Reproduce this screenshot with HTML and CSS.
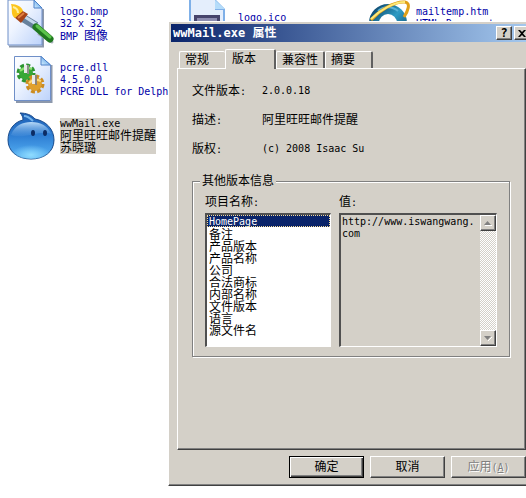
FILE: index.html
```html
<!DOCTYPE html>
<html lang="zh-CN">
  <head>
    <meta charset="UTF-8" />
    <meta name="viewport" content="width=device-width, initial-scale=1.0" />
    <title>wwMail.exe 属性</title>
    <link rel="stylesheet" href="styles.css">
  </head>
  <body>
    <!-- Shared gradients -->
    <svg class="defs" width="0" height="0" aria-hidden="true">
      <defs>
        <linearGradient id="paper" x1="0" y1="0" x2="1" y2="1">
          <stop offset="0" stop-color="#ffffff" />
          <stop offset="0.4" stop-color="#eef4ff" />
          <stop offset="1" stop-color="#bcd2fa" />
        </linearGradient>
        <linearGradient id="fold" x1="0" y1="1" x2="1" y2="0">
          <stop offset="0" stop-color="#d8f0ff" />
          <stop offset="1" stop-color="#3f8fe0" />
        </linearGradient>
        <linearGradient id="drop" x1="0" y1="0" x2="0" y2="1">
          <stop offset="0" stop-color="#1d5fb4" />
          <stop offset="0.5" stop-color="#2f7fd4" />
          <stop offset="1" stop-color="#58b4f6" />
        </linearGradient>
        <radialGradient id="glow" cx="0.5" cy="0.8" r="0.5">
          <stop offset="0" stop-color="#8fdcff" />
          <stop offset="1" stop-color="#8fdcff" stop-opacity="0" />
        </radialGradient>
        <linearGradient id="shine" x1="0" y1="0" x2="0" y2="1">
          <stop offset="0" stop-color="#b8daf8" />
          <stop offset="1" stop-color="#4d93dc" stop-opacity="0.3" />
        </linearGradient>
        <linearGradient id="globe" x1="0" y1="0" x2="1" y2="1">
          <stop offset="0" stop-color="#0f4c72" />
          <stop offset="0.5" stop-color="#2f9cc4" />
          <stop offset="1" stop-color="#0f4c72" />
        </linearGradient>
      </defs>
    </svg>

    <main class="desktop">
      <div class="file">
        <svg class="file-icon" viewBox="0 0 48 48">
          <path d="M2 46.500H36V9" fill="none" stroke="#8c98ac" stroke-width="2" />
          <path d="M1 0H27L35 8V45H1Z" fill="url(#paper)" stroke="#6f8fc8" />
          <path d="M27 0V8H35Z" fill="url(#fold)" stroke="#4c80c8" />
          <path d="M32 34L45 42" stroke="#a8b0bc" stroke-width="3" stroke-linecap="round" />
          <path d="M16 18L29 26" stroke="#66809c" stroke-width="8" />
          <path d="M18 17L29 24" stroke="#c4d8ec" stroke-width="3" />
          <path d="M29 27L43 39" stroke="#207820" stroke-width="7" stroke-linecap="round" />
          <path d="M30 26L43 37" stroke="#5cc44c" stroke-width="3" stroke-linecap="round" />
          <path d="M7 17L14 10L21 14L14 23Z" fill="#a84418" />
          <path d="M11 18L17 13" stroke="#e08040" stroke-width="2" />
          <path d="M4 4C10 4 15 7 16 11L8 18C3 15 6 9 4 4Z" fill="#fcc41c" />
          <path d="M6 7C10 8 11 10 11 13" fill="none" stroke="#fff09c" stroke-width="2" />
        </svg>
        <div class="file-text">
          <p class="latin">logo.bmp</p>
          <p class="latin">32 x 32</p>
          <p><span class="latin">BMP </span>图像</p>
        </div>
      </div>

      <div class="file">
        <svg class="file-icon" viewBox="0 0 48 48">
          <path d="M4 0H31L40 9V47H4Z" fill="#7fb0e8" />
          <path d="M6 0H30V10H38V47H6Z" fill="#e4eefc" />
          <path d="M30 0V9H40Z" fill="#b4dcfa" />
          <path d="M9 15H35V47H9Z" fill="#46446c" />
          <path d="M12 18H32V47H12Z" fill="#8c8cb0" />
        </svg>
        <div class="file-text">
          <p class="latin">logo.ico</p>
          <p>&nbsp;</p>
        </div>
      </div>

      <div class="file">
        <svg class="file-icon" viewBox="0 0 48 48">
          <circle cx="25" cy="23" r="14" fill="none" stroke="url(#globe)" stroke-width="10" />
          <path d="M15 11A15 15 0 0 1 35 11" fill="none" stroke="#5cb4d8" stroke-width="2" />
          <path d="M8 20C16 11 31 1 42 2C48 3 45 11 41 17" fill="none" stroke="#e0a018" stroke-width="3" />
          <path d="M8 19C17 10 31 2 42 2" fill="none" stroke="#fce878" stroke-width="2" />
        </svg>
        <div class="file-text">
          <p class="latin">mailtemp.htm</p>
          <p class="latin">HTML Document</p>
          <p>&nbsp;</p>
        </div>
      </div>

      <div class="file file-first">
        <svg class="file-icon" viewBox="0 0 48 48">
          <path d="M9 46H44.500V9" fill="none" stroke="#8c98ac" stroke-width="2" />
          <path d="M7.500 0.500H34L43.500 9V44.500H7.500Z" fill="url(#paper)" stroke="#6f8fc8" />
          <path d="M34 0.500V9H43.500Z" fill="url(#fold)" stroke="#4c80c8" />
          <circle cx="19" cy="17" r="7" fill="#36a836" />
          <circle cx="19" cy="17" r="8" fill="none" stroke="#2c9430" stroke-width="3" stroke-dasharray="4 2.280" />
          <path d="M13 15Q18 10 25 13" fill="none" stroke="#8ce070" stroke-width="2" />
          <path d="M19 9V17" stroke="#e8e8e8" stroke-width="4" />
          <path d="M21 9V18" stroke="#8c9088" stroke-width="2" />
          <circle cx="28" cy="28" r="7" fill="#e0a02c" />
          <circle cx="28" cy="28" r="8" fill="none" stroke="#cc8c20" stroke-width="3" stroke-dasharray="4 2.280" />
          <path d="M22 27Q27 22 34 25" fill="none" stroke="#fcd878" stroke-width="2" />
          <path d="M27 19V28" stroke="#e8e8e8" stroke-width="4" />
          <path d="M29 19V29" stroke="#8c8478" stroke-width="2" />
        </svg>
        <div class="file-text">
          <p class="latin">pcre.dll</p>
          <p class="latin">4.5.0.0</p>
          <p class="latin">PCRE DLL for Delph</p>
        </div>
      </div>

      <div class="file file-first">
        <svg class="file-icon" viewBox="0 0 48 48">
          <path d="M13 1C19 1 25 3 28 7C39 9 47 17 47 28C47 40 37 47 24 47C10 47 1 39 1 28C1 18 7 10 16 8C16 5 15 3 13 1Z" fill="url(#drop)" stroke="#1c4c8c" />
          <ellipse cx="24" cy="37" rx="20" ry="10" fill="url(#glow)" />
          <path d="M4 23C8 13 16 10 24 10C34 10 41 14 44 22C34 17 17 28 4 23Z" fill="url(#shine)" />
          <path d="M17 4C20 4 23 6 26 9" fill="none" stroke="#74b4ec" stroke-width="2" />
          <ellipse cx="26" cy="21" rx="2" ry="3" fill="#0c2c64" />
          <ellipse cx="38" cy="21" rx="2" ry="3" fill="#0c2c64" />
        </svg>
        <div class="file-text selected">
          <p class="latin">wwMail.exe</p>
          <p>阿里旺旺邮件提醒</p>
          <p>苏晓璐</p>
        </div>
      </div>
    </main>

    <!-- Properties window -->
    <div class="window" role="dialog" aria-labelledby="windowTitle">
      <header class="title-bar">
        <h1 id="windowTitle">wwMail.exe 属性</h1>
        <button class="title-button" aria-label="帮助">?</button>
        <button class="title-button" aria-label="关闭">
          <svg width="8" height="7" viewBox="0 0 8 7">
            <path d="M0 0H2L4 2L6 0H8L5 3.500L8 7H6L4 5L2 7H0L3 3.500Z" fill="#000" />
          </svg>
        </button>
      </header>

      <nav class="tabs" role="tablist">
        <button class="tab" role="tab">常规</button>
        <button class="tab active" role="tab" aria-selected="true">版本</button>
        <button class="tab" role="tab">兼容性</button>
        <button class="tab" role="tab">摘要</button>
      </nav>

      <section class="panel">
        <dl class="details">
          <dt>文件版本<span class="latin">:</span></dt>
          <dd class="latin">2.0.0.18</dd>
          <dt>描述<span class="latin">:</span></dt>
          <dd>阿里旺旺邮件提醒</dd>
          <dt>版权<span class="latin">:</span></dt>
          <dd class="latin">(c) 2008 Isaac Su</dd>
        </dl>

        <fieldset class="group">
          <legend>其他版本信息</legend>
          <div class="field">
            <label for="items">项目名称<span class="latin">:</span></label>
            <select id="items" class="item-list" size="11">
              <option class="latin" selected>HomePage</option>
              <option>备注</option>
              <option>产品版本</option>
              <option>产品名称</option>
              <option>公司</option>
              <option>合法商标</option>
              <option>内部名称</option>
              <option>文件版本</option>
              <option>语言</option>
              <option>源文件名</option>
            </select>
          </div>
          <div class="field value-field">
            <label for="value">值<span class="latin">:</span></label>
            <div class="value-box">
              <textarea id="value" class="latin" readonly>http://www.iswangwang.
com</textarea>
              <div class="scrollbar">
                <button class="scroll-button" aria-label="向上" disabled>
                  <svg width="8" height="5" viewBox="0 0 8 5"><path d="M0 4H7L3.500 0Z" fill="#808080" /><path d="M1 4.500H8" stroke="#fff" /></svg>
                </button>
                <button class="scroll-button" aria-label="向下" disabled>
                  <svg width="8" height="5" viewBox="0 0 8 5"><path d="M4 5L8 1" stroke="#fff" /><path d="M0 0H7L3.500 4Z" fill="#808080" /></svg>
                </button>
              </div>
            </div>
          </div>
        </fieldset>
      </section>

      <footer class="actions">
        <button class="button default">确定</button>
        <button class="button">取消</button>
        <button class="button" disabled>应用<span class="latin">(<u>A</u>)</span></button>
      </footer>
    </div>
  </body>
</html>
```
FILE: styles.css
```css
* {
  box-sizing: border-box;
}

body {
  margin: 0;
  min-height: 100vh;
  position: relative;
  overflow: hidden;
  background-color: #fff;
  color: #000;
  font-family: "DejaVu Sans Mono", "Noto Sans CJK SC", monospace;
  font-size: 12px;
  line-height: 12px;
}

h1,
p,
dl,
dd {
  margin: 0;
}

button,
select,
textarea {
  font-family: inherit;
  font-size: 12px;
  line-height: 12px;
  color: inherit;
  border-radius: 0;
}

svg {
  display: block;
}

/* Half-width text takes half of a 12px Chinese character */
.latin {
  font-size: 10px;
}

.defs {
  position: absolute;
}

/* Desktop files */
.desktop {
  display: grid;
  grid-template-columns: repeat(3, 178px);
  grid-auto-rows: 48px;
  row-gap: 8px;
  padding-left: 7px;
}

.file {
  display: flex;
  align-items: center;
  gap: 5px;
  color: #0000a8;
  white-space: nowrap;
}

.file-first {
  grid-column: 1;
}

.file-icon {
  width: 48px;
  height: 48px;
  flex-shrink: 0;
}

.file-text p {
  height: 12px;
}

.file-text.selected {
  background-color: #d4d0c8;
  color: #000;
}

/* Window */
.window {
  position: absolute;
  top: 21px;
  left: 168px;
  right: -9px;
  padding: 2px 2px 7px;
  background-color: #d4d0c8;
  border: 1px solid #404040;
  border-top-color: #fff;
  border-left-color: #fff;
  box-shadow: inset -1px -1px #808080;
}

.title-bar {
  display: flex;
  align-items: center;
  gap: 2px;
  height: 18px;
  padding: 0 2px;
  background: linear-gradient(to right, #0a246a, #a6caf0);
}

.title-bar h1 {
  flex: 1;
  color: #fff;
  font-size: 12px;
  line-height: 18px;
}

.title-button {
  display: flex;
  align-items: center;
  justify-content: center;
  width: 16px;
  height: 14px;
  padding: 0;
  background-color: #d4d0c8;
  border: 1px solid #404040;
  border-top-color: #fff;
  border-left-color: #fff;
  box-shadow: inset -1px -1px #808080;
  font-weight: bold;
}

/* Tabs */
.tabs {
  display: flex;
  align-items: flex-end;
  margin: 7px 6px 0;
  padding-left: 2px;
}

.tab {
  height: 17px;
  padding: 0 5px;
  background-color: #d4d0c8;
  border: 1px solid #fff;
  border-right: 2px solid #606060;
  border-bottom: none;
  border-radius: 2px 2px 0 0;
}

.tab:first-child {
  padding-right: 16px;
  border-right: none;
}

.tab:last-child {
  padding-right: 16px;
}

.tab.active {
  height: 20px;
  padding: 0 18px 2px 6px;
  margin-bottom: -1px;
  z-index: 1;
}

/* Panel */
.panel {
  margin: 0 6px;
  padding: 16px 15px 92px 14px;
  border: 1px solid #404040;
  border-top-color: #fff;
  border-left-color: #fff;
  box-shadow: inset -1px -1px #808080;
}

.details {
  display: grid;
  grid-template-columns: 70px 1fr;
  row-gap: 16px;
}

.group {
  display: flex;
  gap: 8px;
  margin: 19px 0 0;
  padding: 9px 12px 9px;
  border: 1px solid #808080;
  box-shadow: 1px 1px #fff, inset 1px 1px #fff;
}

.group legend {
  padding: 0 2px;
  margin-left: -5px;
  background-color: #d4d0c8;
}

.field {
  display: flex;
  flex-direction: column;
  gap: 4px;
  width: 126px;
}

.value-field {
  flex: 1;
}

.item-list,
.value-box {
  height: 134px;
  border: 1px solid #fff;
  border-top: 2px solid #505050;
  border-left: 2px solid #505050;
}

.item-list {
  padding: 0;
  background-color: #fff;
  overflow: hidden;
  outline: none;
}

.item-list option {
  display: flex;
  align-items: center;
  height: 12px;
  min-height: 12px;
  padding: 0 2px;
  line-height: 12px;
}

.item-list option:checked {
  background: linear-gradient(#0a246a, #0a246a);
  -webkit-text-fill-color: #fff;
  outline: 1px dotted #f5db95;
  outline-offset: -1px;
}

.value-box {
  display: flex;
}

.value-box textarea {
  flex: 1;
  min-width: 0;
  padding: 1px;
  border: none;
  outline: none;
  resize: none;
  overflow: hidden;
  background-color: transparent;
  font-size: 10px;
}

.scrollbar {
  display: flex;
  flex-direction: column;
  justify-content: space-between;
  width: 16px;
  background: repeating-conic-gradient(#fff 0 25%, #d4d0c8 0 50%) 0 0 / 2px 2px;
}

.scroll-button {
  display: flex;
  align-items: center;
  justify-content: center;
  height: 16px;
  padding: 0;
  background-color: #d4d0c8;
  border: 1px solid #404040;
  border-top-color: #fff;
  border-left-color: #fff;
  box-shadow: inset -1px -1px #808080;
}

/* Bottom buttons */
.actions {
  display: flex;
  justify-content: flex-end;
  gap: 6px;
  padding: 6px 6px 0;
}

.button {
  width: 75px;
  height: 22px;
  padding: 0;
  background-color: #d4d0c8;
  border: 1px solid #404040;
  border-top-color: #fff;
  border-left-color: #fff;
  box-shadow: inset -1px -1px #808080;
}

.button.default {
  border-color: #000;
  box-shadow: inset 1px 1px #fff, inset -1px -1px #404040, inset -2px -2px #808080;
}

.button:disabled {
  color: #808080;
  text-shadow: 1px 1px #fff;
}
```
